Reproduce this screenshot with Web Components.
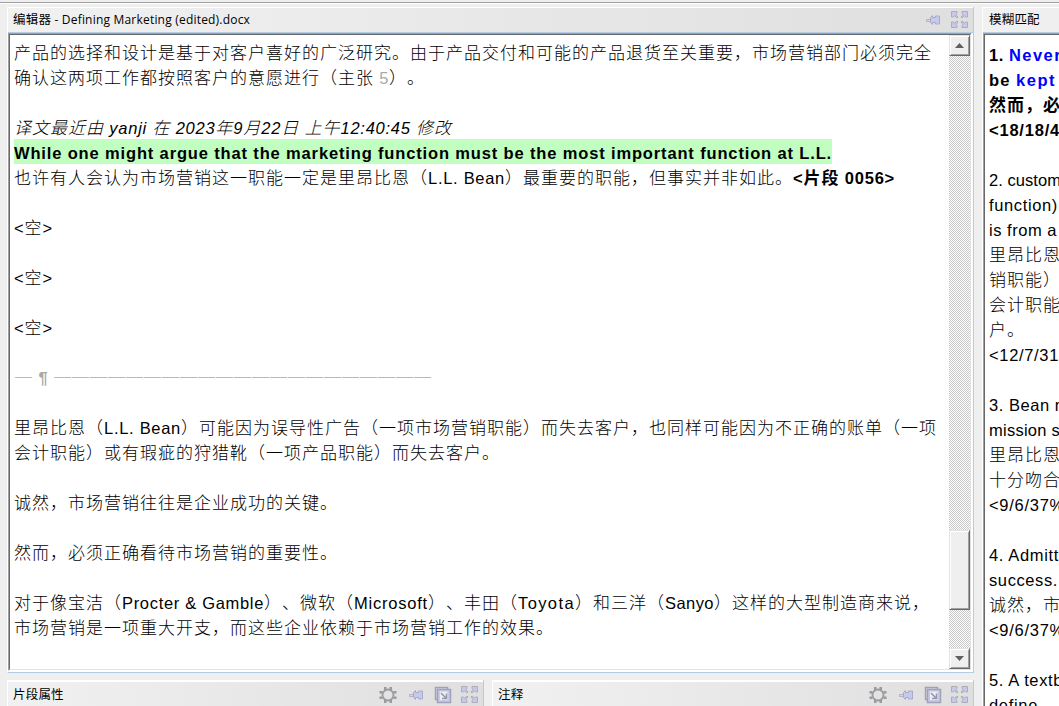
<!DOCTYPE html>
<html lang="zh-CN">
<head>
<meta charset="utf-8">
<title>Defining Marketing (edited).docx</title>
<style>
  body { margin: 0; overflow: hidden; }
</style>
</head>
<body>
<cat-workspace>
  <dock-pane class="editor" heading="编辑器" file=" - Defining Marketing (edited).docx" tools="pin expand" slot="editor">
    <editor-view>
      <doc-line>产品的选择和设计是基于对客户喜好的广泛研究。由于产品交付和可能的产品退货至关重要，市场营销部门必须完全</doc-line>
      <doc-line>确认这两项工作都按照客户的意愿进行（主张<text-run w="15" style="color:#a9a9a9"> 5</text-run>）。</doc-line>
      <doc-line></doc-line>
      <doc-line><text-run w="438" style="font-style:italic">译文最近由 yanji 在 2023年9月22日 上午12:40:45 修改</text-run></doc-line>
      <doc-line><text-run w="818" style="font-weight:bold;background:#c0ffc0">While one might argue that the marketing function must be the most important function at L.L.</text-run></doc-line>
      <doc-line>也许有人会认为市场营销这一职能一定是里昂比恩（<text-run w="77">L.L. Bean</text-run>）最重要的职能，但事实并非如此。<text-run w="102" style="font-weight:bold">&lt;片段 0056&gt;</text-run></doc-line>
      <doc-line></doc-line>
      <doc-line><text-run w="39">&lt;空&gt;</text-run></doc-line>
      <doc-line></doc-line>
      <doc-line><text-run w="39">&lt;空&gt;</text-run></doc-line>
      <doc-line></doc-line>
      <doc-line><text-run w="39">&lt;空&gt;</text-run></doc-line>
      <doc-line></doc-line>
      <doc-line style="color:#a9a9a9;padding-left:1px">─<text-run w="21" style="font-weight:bold"> ¶ </text-run>─────────────────────</doc-line>
      <doc-line></doc-line>
      <doc-line>里昂比恩（<text-run w="77">L.L. Bean</text-run>）可能因为误导性广告（一项市场营销职能）而失去客户，也同样可能因为不正确的账单（一项</doc-line>
      <doc-line>会计职能）或有瑕疵的狩猎靴（一项产品职能）而失去客户。</doc-line>
      <doc-line></doc-line>
      <doc-line>诚然，市场营销往往是企业成功的关键。</doc-line>
      <doc-line></doc-line>
      <doc-line>然而，必须正确看待市场营销的重要性。</doc-line>
      <doc-line></doc-line>
      <doc-line>对于像宝洁（<text-run w="142">Procter &amp; Gamble</text-run>）、微软（<text-run w="74">Microsoft</text-run>）、丰田（<text-run w="57">Toyota</text-run>）和三洋（<text-run w="49">Sanyo</text-run>）这样的大型制造商来说，</doc-line>
      <doc-line>市场营销是一项重大开支，而这些企业依赖于市场营销工作的效果。</doc-line>
    </editor-view>
  </dock-pane>

  <dock-pane class="docked" heading="片段属性" tools="gear pin popout expand" slot="bottom"></dock-pane>
  <dock-pane class="docked" heading="注释" tools="gear pin popout expand" slot="bottom"></dock-pane>

  <dock-pane class="matches" heading="模糊匹配" tools="" slot="side">
    <match-list>
      <doc-line style="font-weight:bold"><text-run w="20">1. </text-run><text-run w="53" style="color:#0000ff">Never</text-run></doc-line>
      <doc-line style="font-weight:bold"><text-run w="27">be </text-run><text-run w="40" style="color:#0000ff">kept</text-run></doc-line>
      <doc-line style="font-weight:bold">然而，必</doc-line>
      <doc-line style="font-weight:bold"><text-run w="71">&lt;18/18/4</text-run></doc-line>
      <doc-line></doc-line>
      <doc-line><text-run w="72">2. custom</text-run></doc-line>
      <doc-line><text-run w="69">function)</text-run></doc-line>
      <doc-line><text-run w="68">is from a</text-run></doc-line>
      <doc-line>里昂比恩</doc-line>
      <doc-line>销职能）</doc-line>
      <doc-line>会计职能</doc-line>
      <doc-line>户。</doc-line>
      <doc-line><text-run w="70">&lt;12/7/31</text-run></doc-line>
      <doc-line></doc-line>
      <doc-line><text-run w="80">3. Bean m</text-run></doc-line>
      <doc-line><text-run w="71">mission s</text-run></doc-line>
      <doc-line>里昂比恩</doc-line>
      <doc-line>十分吻合</doc-line>
      <doc-line><text-run w="76">&lt;9/6/37%</text-run></doc-line>
      <doc-line></doc-line>
      <doc-line><text-run w="70">4. Admitt</text-run></doc-line>
      <doc-line><text-run w="69">success.</text-run></doc-line>
      <doc-line>诚然，市</doc-line>
      <doc-line><text-run w="76">&lt;9/6/37%</text-run></doc-line>
      <doc-line></doc-line>
      <doc-line><text-run w="74">5. A textb</text-run></doc-line>
      <doc-line><text-run w="49">define</text-run></doc-line>
    </match-list>
  </dock-pane>
</cat-workspace>

<script>
const ICONS = {
  gear: `
    <circle cx="9" cy="9" r="5.500" fill="none" stroke="#9a9a9f" stroke-width="1.800"/>
    <g fill="#9a9a9f">
      <path d="M5 1h2.500v3H5zM10.500 1H13v3h-2.500zM5 14h2.500v3H5zM10.500 14H13v3h-2.500z"/>
      <path d="M0.500 5h3v2.500h-3zM0.500 10.500h3V13h-3zM14.500 5h3v2.500h-3zM14.500 10.500h3V13h-3z"/>
    </g>`,
  pin: `
    <path d="M2.500 8.500h4v2h-4z" fill="#d5d6e6" stroke="#b4b4c0"/>
    <path d="M6.500 6.500l2-2v2h3v-1.500h4v8h-4v-1.500h-3v2l-2-2z" fill="#c5c9ee" stroke="#a9abc4"/>`,
  popout: `
    <path d="M1.500 1.500h12v12h-12z" fill="#d5d6e6" stroke="#a2a2b2" stroke-width="1.500"/>
    <path d="M3.500 3.500h13v13h-13z" fill="#c5c9ee" stroke="#a2a2b2" stroke-width="1.500"/>
    <path d="M6 5.500h7.500V14H6z" fill="#ededf2"/>
    <path d="M7 7l5 5M12.500 7.500v5H8" fill="none" stroke="#9696a6" stroke-width="1.500"/>`,
  expand: `
    <g fill="#c5c9ee" stroke="#adadb8" stroke-width="1">
      <path d="M.5.500h5.500v2l-1.200 1L7 6 6 7 3.500 4.800 2.500 6h-2z"/>
      <path d="M16.500.500H11v2l1.200 1L10 6l1 1 2.500-2.200 1 1.200h2z"/>
      <path d="M.5 16.500h5.500v-2l-1.200-1L7 11l-1-1-2.500 2.200L2.500 11h-2z"/>
      <path d="M16.500 16.500H11v-2l1.200-1L10 11l1-1 2.500 2.200 1-1.200h2z"/>
    </g>`,
};

class Workspace extends HTMLElement {
  constructor() {
    super();

    this.attachShadow({ mode: "open" }).innerHTML = `
      <style>
        :host {
          display: grid;
          grid-template-columns: 967px 1fr;
          column-gap: 8px;
          box-sizing: border-box;
          width: 1059px;
          height: 706px;
          padding: 7px 0 0 7px;
          overflow: hidden;
          background: linear-gradient(#efefef 2px, #a0a0a0 2px 3px, #fff 3px 4px, #efefef 4px);
        }

        .left {
          display: grid;
          grid-template-rows: 666px 1fr;
          row-gap: 7px;
          min-height: 0;
        }

        .bottom {
          display: grid;
          grid-template-columns: 477px 1fr;
          column-gap: 8px;
          min-height: 0;
        }

        .side {
          display: grid;
          min-width: 0;
          min-height: 0;
        }
      </style>

      <div class="left">
        <slot name="editor"></slot>
        <div class="bottom"><slot name="bottom"></slot></div>
      </div>
      <div class="side"><slot name="side"></slot></div>
    `;
  }
}

class DockPane extends HTMLElement {
  constructor() {
    super();

    this.attachShadow({ mode: "open" });
  }

  connectedCallback() {
    const tools = this.getAttribute("tools").split(" ").filter(Boolean);
    const icons = tools
      .map((name) => `<svg class="${name}" viewBox="0 0 18 18">${ICONS[name]}</svg>`)
      .join("");
    const shade = tools.length ? "#dfdfdf" : "#efefef";

    this.shadowRoot.innerHTML = `
      <style>
        :host {
          display: flex;
          flex-direction: column;
          min-width: 0;
          min-height: 0;
          overflow: hidden;
          box-sizing: border-box;
          border-left: 1px solid #fff;
          border-right: 1px solid #b4cde6;
          background: #fff;
        }

        :host(.editor) {
          border-bottom: 1px solid #b4cde6;
        }

        :host(.matches) {
          border-right: 0;
        }

        header {
          display: flex;
          align-items: center;
          flex: none;
          box-sizing: border-box;
          height: 26px;
          padding: 0 4px 0 5px;
          border-top: 1px solid #fff;
          border-bottom: 1px solid #b4cde6;
          background: linear-gradient(90deg, #f1f1f1, ${shade});
          font: 12.500px/24px "Open Sans", "Noto Sans CJK SC", sans-serif;
          color: #000;
        }

        :host(.docked) header {
          height: 28px;
          border-top-width: 2px;
        }

        :host(.matches) header {
          padding-left: 6px;
        }

        .title {
          flex: 1;
          white-space: pre;
          margin-top: -1px;
        }

        .name {
          font-family: "Noto Sans CJK SC", sans-serif;
          letter-spacing: 0.2px;
        }

        .file {
          font-size: 12px;
          letter-spacing: 0.2px;
        }

        svg {
          width: 18px;
          height: 18px;
          margin-left: 9px;
        }

        .gear {
          margin-right: 1px;
        }
      </style>

      <header>
        <span class="title"><span class="name">${this.getAttribute("heading")}</span><span class="file">${this.getAttribute("file") || ""}</span></span>
        ${icons}
      </header>
      <slot></slot>
    `;
  }
}

class EditorView extends HTMLElement {
  constructor() {
    super();

    this.attachShadow({ mode: "open" }).innerHTML = `
      <style>
        :host {
          display: flex;
          flex: 1;
          min-height: 0;
          margin: 0 1px 1px 0;
          border: 1px solid;
          border-color: #a0a0a0 #fff #fff #a0a0a0;
          background: #fff;
        }

        .frame {
          display: flex;
          flex: 1;
          min-width: 0;
          border: 1px solid;
          border-color: #696969 #e3e3e3 #e3e3e3 #696969;
        }

        .text {
          flex: 1;
          min-width: 0;
          padding: 4px 0 0 4px;
        }
      </style>

      <div class="frame">
        <div class="text"><slot></slot></div>
        <scroll-bar></scroll-bar>
      </div>
    `;
  }
}

class ScrollBar extends HTMLElement {
  constructor() {
    super();

    this.attachShadow({ mode: "open" }).innerHTML = `
      <style>
        :host {
          display: grid;
          grid-template-rows: 21px 474px 80px 1fr 21px;
          width: 21px;
          background: conic-gradient(#fff 25%, #c8c8c8 0 50%, #fff 0 75%, #c8c8c8 0) 0 0 / 2px 2px;
        }

        .button, .thumb {
          display: grid;
          place-items: center;
          background: #efefef;
          border: 1px solid;
          border-color: #e3e3e3 #696969 #696969 #e3e3e3;
          box-shadow: inset 1px 1px #fff, inset -1px -1px #a0a0a0;
        }

        svg {
          width: 9px;
          height: 5px;
        }
      </style>

      <div class="button"><svg viewBox="0 0 9 5"><path d="M0 5L4.500 0 9 5z" fill="#606060"/></svg></div>
      <div></div>
      <div class="thumb"></div>
      <div></div>
      <div class="button"><svg viewBox="0 0 9 5"><path d="M0 0L4.500 5 9 0z" fill="#606060"/></svg></div>
    `;
  }
}

class MatchList extends HTMLElement {
  constructor() {
    super();

    this.attachShadow({ mode: "open" }).innerHTML = `
      <style>
        :host {
          display: flex;
          flex: 1;
          min-height: 0;
          overflow: hidden;
          border: solid #a0a0a0;
          border-width: 1px 0 0 1px;
          background: #fff;
        }

        .frame {
          flex: 1;
          min-width: 0;
          padding: 6px 0 0 4px;
          border: solid #696969;
          border-width: 1px 0 0 1px;
        }
      </style>

      <div class="frame"><slot></slot></div>
    `;
  }
}

// white-space is pre here, so nothing may stand around the style and the slot
class DocLine extends HTMLElement {
  constructor() {
    super();

    this.attachShadow({ mode: "open" }).innerHTML = `<style>
        :host {
          display: block;
          height: 25px;
          font: 300 17px/25px "Noto Sans CJK SC", sans-serif;
          letter-spacing: 1px;
          text-spacing-trim: space-all;
          white-space: pre;
          color: #000;
        }
      </style><slot></slot>`;
  }
}

// Latin text gets its own tracking so the run fills w pixels; hanzi keep an 18px cell
class TextRun extends HTMLElement {
  constructor() {
    super();

    this.attachShadow({ mode: "open" });
  }

  connectedCallback() {
    const parts = this.textContent.match(/[\u3000-\u9fff]+|[^\u3000-\u9fff]+/g);
    const spans = parts
      .map((part) => {
        const type = /[\u3000-\u9fff]/.test(part) ? "han" : "latin";
        return `<span class="${type}">${part.replace(/&/g, "&amp;").replace(/</g, "&lt;")}</span>`;
      })
      .join("");

    this.shadowRoot.innerHTML = `<style>
        :host {
          display: inline-block;
          height: 25px;
          vertical-align: top;
          white-space: pre;
        }

        .latin {
          font-family: "Liberation Sans", sans-serif;
          font-size: 16.500px;
          letter-spacing: var(--tracking, 0);
        }
      </style>${spans}`;

    const count = parts
      .filter((part) => !/[\u3000-\u9fff]/.test(part))
      .join("").length;
    this.style.setProperty("--tracking", "0px");
    const free = this.getAttribute("w") - this.getBoundingClientRect().width;

    this.style.setProperty("--tracking", `${free / count}px`);
  }
}

customElements.define("cat-workspace", Workspace);
customElements.define("dock-pane", DockPane);
customElements.define("editor-view", EditorView);
customElements.define("scroll-bar", ScrollBar);
customElements.define("match-list", MatchList);
customElements.define("doc-line", DocLine);
customElements.define("text-run", TextRun);
</script>
</body>
</html>
